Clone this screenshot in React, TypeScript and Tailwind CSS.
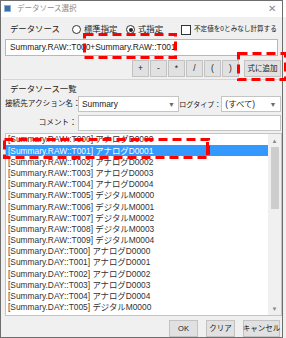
const rows = [
  '[Summary.RAW::T000] アナログD0000',
  '[Summary.RAW::T001] アナログD0001',
  '[Summary.RAW::T002] アナログD0002',
  '[Summary.RAW::T003] アナログD0003',
  '[Summary.RAW::T004] アナログD0004',
  '[Summary.RAW::T005] デジタルM0000',
  '[Summary.RAW::T006] デジタルM0001',
  '[Summary.RAW::T007] デジタルM0002',
  '[Summary.RAW::T008] デジタルM0003',
  '[Summary.RAW::T009] デジタルM0004',
  '[Summary.DAY::T000] アナログD0000',
  '[Summary.DAY::T001] アナログD0001',
  '[Summary.DAY::T002] アナログD0002',
  '[Summary.DAY::T003] アナログD0003',
  '[Summary.DAY::T004] アナログD0004',
  '[Summary.DAY::T005] デジタルM0000',
];

const ops = ['+', '-', '*', '/', '(', ')'];

// red dashed annotation box
function Mark({ x, y, w, h, solidRight }: { x: number; y: number; w: number; h: number; solidRight?: boolean }) {
  return (
    <svg className="absolute pointer-events-none" style={{ left: x, top: y }} width={w} height={h}>
      <rect x={1.5} y={1.5} width={w - 3} height={h - 3} fill="none" stroke="#ff0000" strokeWidth={3} strokeDasharray="9 5" />
      {solidRight && <rect x={w - 4} y={4} width={3} height={h - 8} fill="#ff0000" />}
    </svg>
  );
}

function Combo({ value, className }: { value: string; className: string }) {
  return (
    <div className={`h-[16px] bg-white border border-[#c4c4c4] flex items-center ${className}`}>
      <span className="flex-1 pl-[3px]">{value}</span>
      <span className="w-[14px] text-center text-[7px] text-[#6b6b6b]">▼</span>
    </div>
  );
}

export default function App() {
  return (
    <div
      className="relative w-[286px] h-[338px] overflow-hidden bg-[#f0f0f0] text-[8.4px] text-[#1a1a1a] leading-none whitespace-nowrap"
      style={{ fontFamily: '"Liberation Sans", "Noto Sans CJK JP", sans-serif' }}
    >
      <div className="absolute inset-0 right-[3px] border border-[#6d6d6d] pointer-events-none" />

      {/* title bar */}
      <div className="h-[17px] bg-white flex items-center pl-[4px] pr-[6px]">
        <div className="w-[7px] h-[7px] bg-[#3c6fa8] border border-[#8fb0d6]" />
        <span className="ml-[6px] text-[7.5px] text-[#8a8a8a]">データソース選択</span>
        <span className="ml-auto mr-[4px] text-[10px] text-[#8a8a8a]">✕</span>
      </div>

      <div className="px-[5px]">
        {/* source type */}
        <div className="h-[17px] mt-[4px] flex items-center">
          <span className="ml-[5px] w-[62px]">データソース</span>
          <span className="w-[9px] h-[9px] rounded-full border border-[#333] bg-white" />
          <span className="ml-[3px] w-[42px]">標準指定</span>
          <span className="w-[9px] h-[9px] rounded-full border border-[#333] bg-white flex items-center justify-center">
            <span className="w-[4px] h-[4px] rounded-full bg-[#222]" />
          </span>
          <span className="ml-[3px] w-[43px]">式指定</span>
          <span className="w-[10px] h-[10px] border border-[#333] bg-white" />
          <span className="ml-[3px] text-[6.6px]">不定値を0とみなし計算する</span>
        </div>

        {/* expression */}
        <div className="h-[17px] mt-[1px] mr-[3px] bg-white border border-[#b8b8b8] flex items-center pl-[4px]">
          Summary.RAW::T000+Summary.RAW::T001
        </div>

        {/* operators */}
        <div className="h-[17px] mt-[4px] flex justify-end gap-[1px]">
          {ops.map(o => (
            <div key={o} className="w-[17px] bg-[#e1e1e1] border border-[#c2c2c2] flex items-center justify-center">{o}</div>
          ))}
          <div className="ml-[4px] w-[37px] bg-[#e1e1e1] border border-[#c2c2c2] flex items-center justify-center text-[7.5px]">式に追加</div>
        </div>
      </div>

      <div className="mt-[2px] mx-[3px] mr-[6px] border-t border-[#d5d5d5]" />

      <div className="px-[5px]">
        <div className="mt-[4px] ml-[5px] h-[10px] flex items-center">データソース一覧</div>

        <div className="mt-[2px] flex items-center">
          <span className="w-[73px] text-right pr-[1px] text-[7.6px]">接続先アクション名：</span>
          <Combo value="Summary" className="w-[102px]" />
          <span className="w-[42px] text-right text-[7px]">ログタイプ：</span>
          <Combo value="(すべて)" className="w-[60px]" />
        </div>

        <div className="mt-[3px] flex items-center">
          <span className="w-[73px] text-right pr-[1px] text-[7.6px]">コメント：</span>
          <div className="h-[16px] w-[204px] bg-white border border-[#c4c4c4]" />
        </div>

        {/* list */}
        <div className="mt-[2px] h-[183px] w-[277px] bg-white border border-[#c4c4c4] flex">
          <div className="flex-1">
            {rows.map((r, i) => (
              <div
                key={i}
                className={`h-[11.2px] flex items-center pl-[2px] ${i === 1 ? 'bg-[#3399ff] text-white' : 'text-[#333]'}`}
              >
                {r}
              </div>
            ))}
          </div>
          <div className="w-[13px] bg-[#f0f0f0] flex flex-col items-center">
            <span className="mt-[4px] text-[6px] text-[#8a8a8a]">▲</span>
            <div className="mt-[3px] w-[8px] h-[62px] bg-[#cdcdcd]" />
            <span className="mt-auto mb-[3px] text-[6px] text-[#8a8a8a]">▼</span>
          </div>
        </div>

        {/* footer */}
        <div className="mt-[4px] flex justify-end gap-[8px] pr-[1px]">
          <div className="w-[29px] h-[17px] bg-[#e1e1e1] border border-[#c2c2c2] flex items-center justify-center text-[7.5px]">OK</div>
          <div className="w-[29px] h-[17px] bg-[#e1e1e1] border border-[#c2c2c2] flex items-center justify-center text-[7.5px]">クリア</div>
          <div className="w-[37px] h-[17px] bg-[#e1e1e1] border border-[#c2c2c2] flex items-center justify-center text-[7.5px]">キャンセル</div>
        </div>
      </div>

      <Mark x={83} y={33} w={94} h={26} />
      <Mark x={237} y={52} w={50} h={29} />
      <Mark x={3} y={138} w={207} h={21} solidRight />
    </div>
  );
}
